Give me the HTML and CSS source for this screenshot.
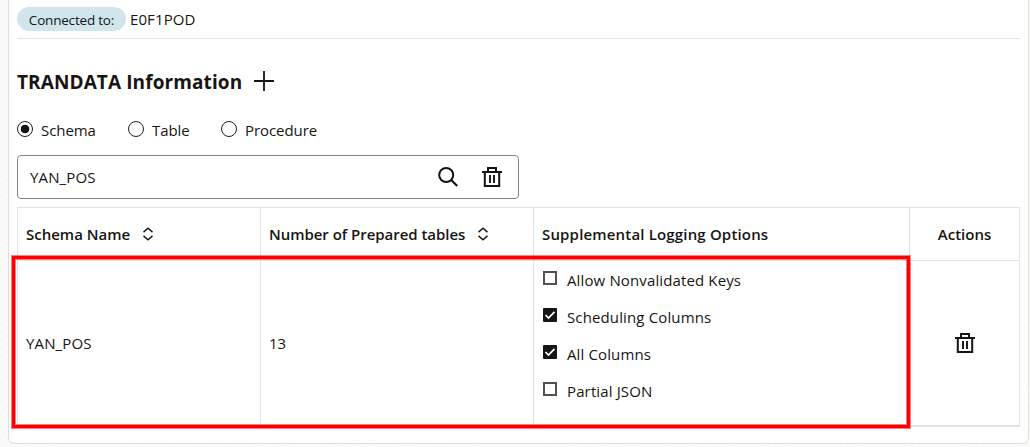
FILE: index.html
```html
<!DOCTYPE html>
<html lang="en">
<head>
<meta charset="utf-8">
<title>TRANDATA Information</title>
<link rel="stylesheet" href="styles.css">
</head>
<body>
<svg class="sprite" aria-hidden="true">
  <symbol id="trash" viewBox="0 0 20 20"><path fill="none" stroke="currentColor" stroke-width="2" d="M0 5h20M2.8 5v14h14.4V5M6 5V1h8v4"/><path fill="none" stroke="currentColor" stroke-width="1.9" d="M8 8v8M12 8v8"/></symbol>
  <symbol id="sort" viewBox="0 0 12 14"><path fill="none" stroke="currentColor" stroke-width="1.4" d="M1.5 5.1 6 1.2l4.5 3.9M1.5 8.9 6 12.8l4.5-3.9"/></symbol>
  <symbol id="check" viewBox="0 0 14 14"><path fill="none" stroke="#fff" stroke-width="1.7" d="m2.5 7 3 3 6-6.2"/></symbol>
</svg>
<main class="panel">
  <div class="connection"><span class="badge"><span>Connected to:</span></span><span class="pod">E0F1POD</span></div>
  <div class="title-row">
    <h1><span>TRANDATA Information</span></h1>
    <svg class="plus" viewBox="0 0 20 20"><path fill="none" stroke="currentColor" stroke-width="1.8" d="M10 0v20M0 10h20"/></svg>
  </div>
  <div class="radios">
    <label class="radio r-schema"><i class="dot selected"></i><span>Schema</span></label>
    <label class="radio r-table"><i class="dot"></i><span>Table</span></label>
    <label class="radio r-procedure"><i class="dot"></i><span>Procedure</span></label>
  </div>
  <div class="search">
    <span class="query">YAN_POS</span>
    <svg class="icon" viewBox="0 0 20 20"><circle cx="8.2" cy="8" r="7" fill="none" stroke="currentColor" stroke-width="2"/><path stroke="currentColor" stroke-width="2.2" d="m13.2 13 6 6"/></svg>
    <svg class="icon"><use href="#trash"/></svg>
  </div>
  <div class="table">
    <div class="cell head"><span class="h-name">Schema Name</span><svg class="sort"><use href="#sort"/></svg></div>
    <div class="cell head"><span class="h-number">Number of Prepared tables</span><svg class="sort"><use href="#sort"/></svg></div>
    <div class="cell head"><span class="h-options">Supplemental Logging Options</span></div>
    <div class="cell head center"><span class="h-actions">Actions</span></div>
    <div class="cell"><span class="name">YAN_POS</span></div>
    <div class="cell"><span class="count">13</span></div>
    <div class="cell options">
      <label class="option"><i class="box"></i><span class="o-keys">Allow Nonvalidated Keys</span></label>
      <label class="option"><svg class="box checked"><use href="#check"/></svg><span class="o-keys">Scheduling Columns</span></label>
      <label class="option"><svg class="box checked"><use href="#check"/></svg><span class="o-keys">All Columns</span></label>
      <label class="option"><i class="box"></i><span class="o-keys">Partial JSON</span></label>
    </div>
    <div class="cell center"><svg class="icon"><use href="#trash"/></svg></div>
    <div class="highlight"></div>
  </div>
</main>
</body>
</html>
```
FILE: styles.css
```css
* { box-sizing: border-box; }
body {
  margin: 0;
  height: 447px;
  overflow: hidden;
  padding: 0 1px 0 8px;
  color: #161513;
  background: #f9f9f8 repeating-radial-gradient(ellipse at 30% 120%, #fafaf9 0 5px, #f7f7f6 6px 7px);
  font: 15px/20px "Open Sans", "Noto Sans", sans-serif;
  white-space: nowrap;
}
.sprite { position: absolute; width: 0; height: 0; }
svg { display: block; flex: none; }
.panel {
  height: 444px;
  padding: 0 8px;
  background: #fff;
  border: 1px solid #dfdfdf;
  border-top: 0;
  border-radius: 0 0 6px 6px;
}
.connection {
  display: flex;
  align-items: center;
  gap: 4px;
  height: 39px;
  border-bottom: 1px solid #e1e1e1;
}
.badge {
  display: flex;
  align-items: center;
  justify-content: center;
  width: 109px;
  height: 24px;
  border-radius: 12px;
  background: #d1e5ec;
  font-size: 13.5px;
  letter-spacing: -0.2px;
  padding-top: 2px;
}
.pod { letter-spacing: 0.1px; }
.title-row {
  display: flex;
  align-items: center;
  height: 84px;
}
h1 { width: 237px; margin: 2px 0 0; font-size: 19px; line-height: 28px; font-weight: 700; letter-spacing: 0.1px; }
.plus { width: 20px; height: 20px; }
.radios { display: flex; height: 32px; }
.radio { display: flex; align-items: center; height: 12px; gap: 8px; }
.radio span { padding-top: 2px; letter-spacing: -0.06px; }
.r-schema { width: 111px; }
.r-table { width: 93px; }
.dot { width: 16px; height: 16px; border: 1.6px solid #201f1d; border-radius: 50%; }
.selected { background: radial-gradient(circle, #161513 0 4px, #fff 4.6px); }
.search {
  display: flex;
  align-items: center;
  width: 502px;
  height: 44px;
  padding: 0 16px 0 12px;
  gap: 24px;
  border: 1px solid #858481;
  border-radius: 4px;
}
.query, .name { letter-spacing: 0.15px; }
.query { flex: 1; }
.icon { width: 20px; height: 20px; }
.table {
  position: relative;
  display: grid;
  grid-template-columns: 243px 273px 376px 111px;
  grid-template-rows: 53px 165px;
  width: 1003px;
  margin-top: 8px;
  border-top: 1px solid #e2e2e1;
  border-bottom: 1px solid #e2e2e1;
}
.cell {
  display: flex;
  align-items: center;
  padding-left: 8px;
  border-left: 1px solid #e2e2e1;
  border-bottom: 1px solid #e2e2e1;
}
.center { justify-content: center; padding: 0; border-right: 1px solid #e2e2e1; }
.head { font-weight: 600; gap: 12px; }
.h-number { letter-spacing: -0.04px; }
.h-options { letter-spacing: 0.17px; }
.sort { width: 12px; height: 14px; }
.options { flex-direction: column; align-items: flex-start; justify-content: flex-start; padding: 8px 0 0 9px; gap: 17px; }
.option { display: flex; height: 20px; gap: 10px; }
.option span { padding-top: 1px; }
.o-keys { letter-spacing: 0.13px; }
.box { display: block; width: 14px; height: 14px; border: 2px solid #53514e; margin-top: 2px; }
.checked { border: 0; background: #161513; border-radius: 1px; }
.highlight {
  position: absolute;
  left: -5px;
  top: 48px;
  width: 898px;
  height: 172px;
  border: 3px solid #f00;
  box-shadow: 0 0 0 1px rgba(255, 0, 0, .5), inset 0 0 0 1px rgba(255, 0, 0, .5);
}
```
